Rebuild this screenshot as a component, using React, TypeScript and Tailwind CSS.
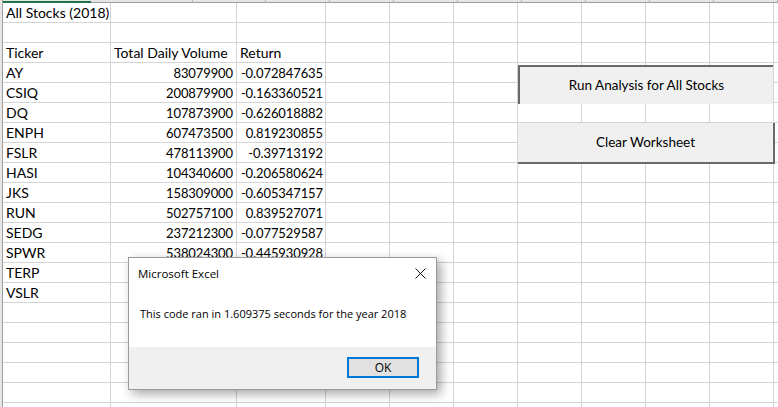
import React from "react";

const rows: [string, string, string][] = [
  ["All Stocks (2018)", "", ""],
  ["", "", ""],
  ["Ticker", "Total Daily Volume", "Return"],
  ["AY", "83079900", "-0.072847635"],
  ["CSIQ", "200879900", "-0.163360521"],
  ["DQ", "107873900", "-0.626018882"],
  ["ENPH", "607473500", "0.819230855"],
  ["FSLR", "478113900", "-0.39713192"],
  ["HASI", "104340600", "-0.206580624"],
  ["JKS", "158309000", "-0.605347157"],
  ["RUN", "502757100", "0.839527071"],
  ["SEDG", "237212300", "-0.077529587"],
  ["SPWR", "538024300", "-0.445930928"],
  ["TERP", "", ""],
  ["VSLR", "", ""],
  ["", "", ""],
  ["", "", ""],
  ["", "", ""],
  ["", "", ""],
  ["", "", ""],
  ["", "", ""],
];

const extraCols = [0, 1, 2, 3, 4, 5, 6, 7];

export default function App() {
  return (
    <div
      className="relative w-[778px] h-[407px] overflow-hidden bg-white text-black"
      style={{ fontFamily: "Lato, 'Liberation Sans', sans-serif" }}
    >
      {/* column header strip */}
      <div className="flex h-[3px] bg-[#e6e6e6]">
        <div className="w-[3px] border-r border-[#9e9e9e]" />
        <div className="w-[108px] flex flex-col">
          <div className="h-[1px]" />
          <div className="h-[2px] bg-[#217346]" />
        </div>
        <div className="w-[126px] border-r border-[#b5b5b5] border-b border-b-[#9e9e9e]" />
        <div className="w-[89px] border-r border-[#b5b5b5] border-b border-b-[#9e9e9e]" />
        {extraCols.map((c) => (
          <div key={c} className="w-[64px] shrink-0 border-r border-[#b5b5b5] border-b border-b-[#9e9e9e]" />
        ))}
      </div>
      {/* grid */}
      <div className="flex flex-col">
        {rows.map((r, i) => (
          <div key={i} className="flex h-[20px] text-[14px] leading-[19px]">
            <div className="w-[3px] shrink-0 bg-[#e6e6e6] border-r border-[#9e9e9e]" />
            <div className="w-[108px] shrink-0 border-r border-b border-[#d4d4d4] pl-[3px] whitespace-nowrap">
              {r[0]}
            </div>
            <div
              className={`w-[126px] shrink-0 border-r border-b border-[#d4d4d4] whitespace-nowrap ${
                i === 2 ? "pl-[3px] text-left" : "pr-[3px] text-right text-[13px] leading-[20px] tracking-[-0.1px]"
              }`}
            >
              {r[1]}
            </div>
            <div
              className={`w-[89px] shrink-0 border-r border-b border-[#d4d4d4] whitespace-nowrap ${
                i === 2 ? "pl-[3px] text-left" : "pr-[2px] text-right text-[13px] leading-[20px] tracking-[-0.1px]"
              }`}
            >
              {r[2]}
            </div>
            {extraCols.map((c) => (
              <div key={c} className="w-[64px] shrink-0 border-r border-b border-[#d4d4d4]" />
            ))}
          </div>
        ))}
      </div>

      {/* form buttons */}
      <div className="absolute left-[518px] top-[65px] w-[255px] h-[39px] bg-[#f0f0f0] border-l-2 border-t-2 border-[#696969] flex items-center justify-center text-[13.5px]">
        Run Analysis for All Stocks
      </div>
      <div className="absolute left-[518px] top-[123px] w-[257px] h-[41px] bg-[#f0f0f0] border-r-2 border-b-2 border-[#696969] flex items-center justify-center text-[13.5px]">
        Clear Worksheet
      </div>

      {/* dialog */}
      <div
        className="absolute left-[128px] top-[257px] w-[309px] h-[133px] bg-white border border-[#9a9a9a] shadow-[4px_4px_10px_rgba(0,0,0,0.35)] flex flex-col"
        style={{ fontFamily: "'Open Sans', 'Noto Sans', sans-serif" }}
      >
        <div className="flex items-center justify-between h-[31px] pl-[9px] pr-[9px]">
          <span className="text-[11.5px] text-black">Microsoft Excel</span>
          <svg width="11" height="11" viewBox="0 0 11 11" className="mr-[1px]">
            <path d="M0.5 0.5 L10.5 10.5 M10.5 0.5 L0.5 10.5" stroke="#111" strokeWidth="1" />
          </svg>
        </div>
        <div className="flex-1 pl-[11px] pt-[17px] text-[11px] text-black">
          This code ran in 1.609375 seconds for the year 2018
        </div>
        <div className="h-[42px] bg-[#f0f0f0] flex items-start justify-end pr-[17px] pt-[10px]">
          <div className="w-[72px] h-[21px] bg-[#e1e1e1] border-2 border-[#0078d7] flex items-center justify-center text-[12px]">
            OK
          </div>
        </div>
      </div>
    </div>
  );
}
